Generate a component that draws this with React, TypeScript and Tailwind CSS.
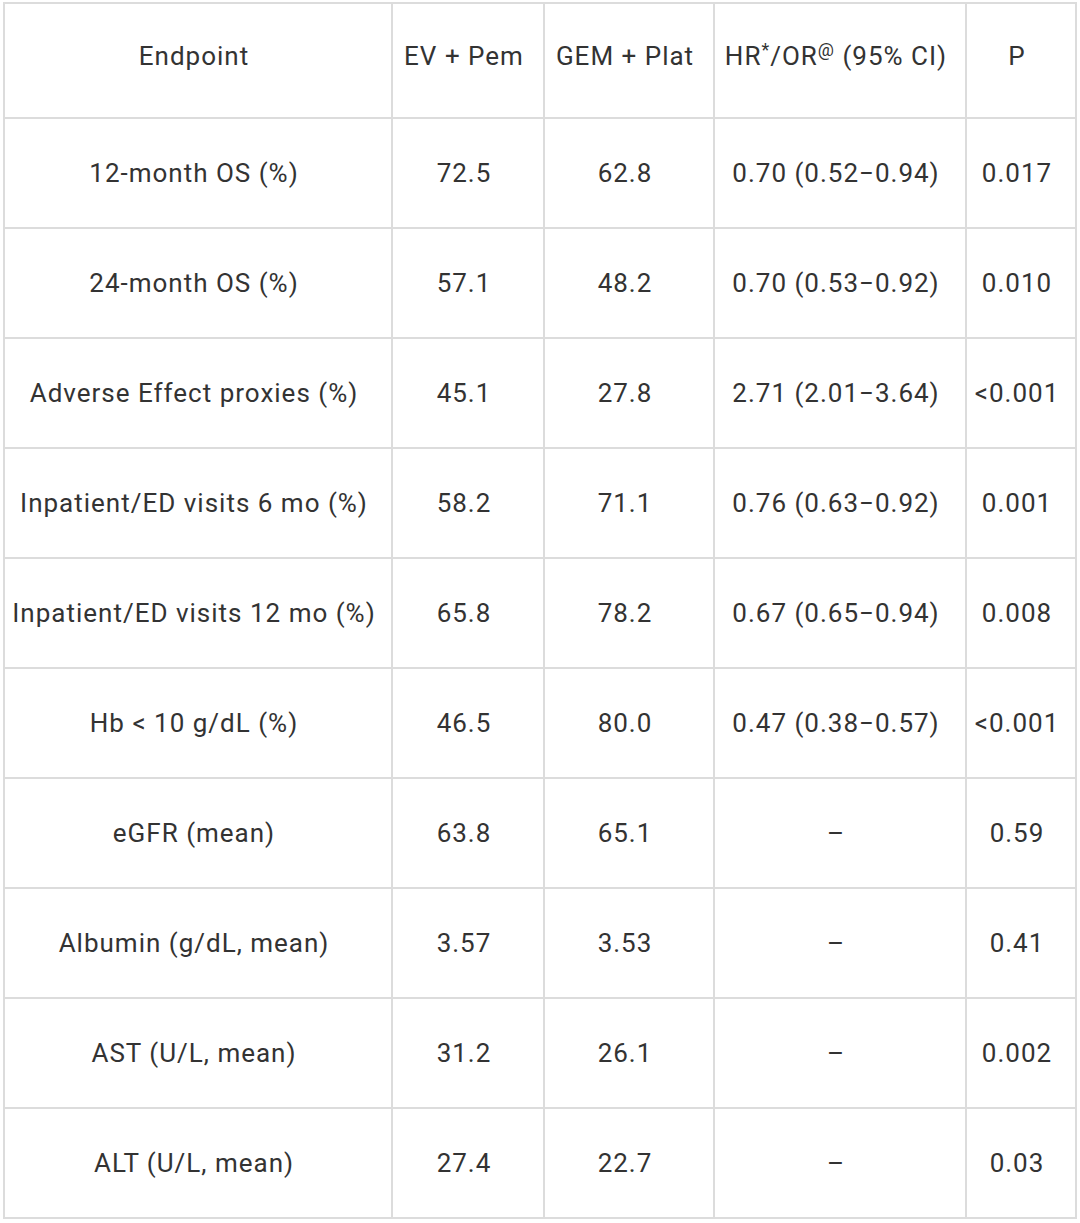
const rows: [string, string, string, string, string][] = [
  ["12-month OS (%)", "72.5", "62.8", "0.70 (0.52−0.94)", "0.017"],
  ["24-month OS (%)", "57.1", "48.2", "0.70 (0.53−0.92)", "0.010"],
  ["Adverse Effect proxies (%)", "45.1", "27.8", "2.71 (2.01−3.64)", "<0.001"],
  ["Inpatient/ED visits 6 mo (%)", "58.2", "71.1", "0.76 (0.63−0.92)", "0.001"],
  ["Inpatient/ED visits 12 mo (%)", "65.8", "78.2", "0.67 (0.65−0.94)", "0.008"],
  ["Hb < 10 g/dL (%)", "46.5", "80.0", "0.47 (0.38−0.57)", "<0.001"],
  ["eGFR (mean)", "63.8", "65.1", "–", "0.59"],
  ["Albumin (g/dL, mean)", "3.57", "3.53", "–", "0.41"],
  ["AST (U/L, mean)", "31.2", "26.1", "–", "0.002"],
  ["ALT (U/L, mean)", "27.4", "22.7", "–", "0.03"],
];

const cell =
  "border-2 border-[#dcdcdc] text-center align-middle py-0 pl-0 pr-2 whitespace-nowrap";

export default function App() {
  return (
    <div className="min-h-screen bg-white pl-[3px] pt-[2px] font-['Roboto',sans-serif] text-[26px] tracking-[1px] text-[#333]">
      <table className="table-fixed border-collapse">
        <colgroup>
          <col className="w-[388px]" />
          <col className="w-[152px]" />
          <col className="w-[170px]" />
          <col className="w-[252px]" />
          <col className="w-[110px]" />
        </colgroup>
        <thead>
          <tr className="h-[115px]">
            <th className={`${cell} pb-2 font-normal`}>Endpoint</th>
            <th className={`${cell} pb-2 font-normal`}>EV + Pem</th>
            <th className={`${cell} pb-2 font-normal`}>GEM + Plat</th>
            <th className={`${cell} pb-2 font-normal`}>
              HR<sup className="text-[18px]">*</sup>/OR
              <sup className="text-[18px]">@</sup> (95% CI)
            </th>
            <th className={`${cell} pb-2 font-normal`}>P</th>
          </tr>
        </thead>
        <tbody>
          {rows.map((r) => (
            <tr key={r[0]} className="h-[110px]">
              {r.map((v, i) => (
                <td key={i} className={cell}>
                  {v}
                </td>
              ))}
            </tr>
          ))}
        </tbody>
      </table>
    </div>
  );
}
